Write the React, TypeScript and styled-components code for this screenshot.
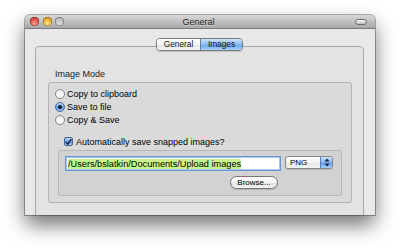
import React from "react";
import styled, { createGlobalStyle } from "styled-components";

const Global = createGlobalStyle`
  html, body { margin: 0; padding: 0; background: #fff; }
  body { font-family: "Liberation Sans", Arial, sans-serif; color: #000; }
  * { box-sizing: border-box; }
`;

const Stage = styled.div`
  width: 400px;
  height: 250px;
  overflow: hidden;
  padding: 15px 0 0 25px;
  background: #fff;
`;

const Window = styled.div`
  width: 350px;
  height: 200px;
  display: flex;
  flex-direction: column;
  border-radius: 5px 5px 0 0;
  overflow: hidden;
  background: #e8e8e8;
  box-shadow: 0 0 0 1px rgba(0, 0, 0, 0.3), 0 10px 20px rgba(0, 0, 0, 0.55);
`;

const TitleBar = styled.div`
  flex: none;
  height: 14px;
  display: grid;
  grid-template-columns: 1fr auto 1fr;
  align-items: center;
  padding: 0 8px 0 5px;
  background: linear-gradient(#d8d8d8, #a8a8a8);
  border-bottom: 1px solid #7a7a7a;
`;

const Lights = styled.div`
  display: flex;
  gap: 3.5px;
`;

const Light = styled.span<{ $c: string; $d: string }>`
  width: 9px;
  height: 9px;
  border-radius: 50%;
  background: radial-gradient(circle at 50% 72%, ${(p) => p.$c} 0%, ${(p) => p.$d} 85%);
  box-shadow: inset 0 0 0 0.6px rgba(0, 0, 0, 0.45);
`;

const Title = styled.div`
  font-size: 9px;
  line-height: 10px;
  color: #1e1e1e;
  text-shadow: 0 1px 0 rgba(255, 255, 255, 0.4);
`;

const Pill = styled.span`
  justify-self: end;
  width: 12px;
  height: 6px;
  border-radius: 3px;
  border: 1px solid #6e6e6e;
  background: linear-gradient(#fafafa, #bcbcbc);
`;

const Content = styled.div`
  flex: 1;
  min-height: 0;
  display: flex;
  flex-direction: column;
  padding: 9px 11px 0 10px;
  background: #e8e8e8;
`;

const Segmented = styled.div`
  flex: none;
  align-self: center;
  position: relative;
  z-index: 1;
  margin-bottom: -5px;
  display: flex;
  height: 13px;
  border: 1px solid #7a7a7a;
  border-radius: 4px;
  overflow: hidden;
  box-shadow: 0 1px 1px rgba(0, 0, 0, 0.15);
`;

const Seg = styled.div<{ $active?: boolean; $w: number }>`
  width: ${(p) => p.$w}px;
  text-align: center;
  font-size: 8.3px;
  line-height: 11px;
  color: #111;
  background: ${(p) =>
    p.$active
      ? "linear-gradient(#cfe4fb 0%, #8ab9f1 50%, #6aa5ee 55%, #a9d1fa 100%)"
      : "linear-gradient(#ffffff 0%, #f3f3f3 50%, #e6e6e6 55%, #f6f6f6 100%)"};
  & + & {
    border-left: 1px solid #6f7f95;
  }
`;

const TabView = styled.div`
  flex: none;
  height: 180px;
  display: flex;
  flex-direction: column;
  border: 1px solid #a9a9a9;
  border-radius: 4px;
  background: #e3e3e3;
  padding: 22px 11px 0 12px;
`;

const GroupLabel = styled.div`
  font-size: 9px;
  line-height: 11px;
  margin: 0 0 2px 7px;
  color: #1a1a1a;
`;

const Group = styled.div`
  flex: none;
  height: 121px;
  display: flex;
  flex-direction: column;
  border: 1px solid #b3b3b3;
  border-radius: 3px;
  background: #dadada;
  padding: 4px 9px 0 6px;
`;

const Row = styled.label<{ $indent?: number; $top?: number }>`
  flex: none;
  display: flex;
  align-items: center;
  gap: 2px;
  height: 13px;
  font-size: 9px;
  margin-left: ${(p) => p.$indent ?? 0}px;
  margin-top: ${(p) => p.$top ?? 0}px;
`;

const Radio = styled.span<{ $on?: boolean }>`
  width: 10px;
  height: 10px;
  border-radius: 50%;
  display: flex;
  align-items: center;
  justify-content: center;
  border: 1px solid ${(p) => (p.$on ? "#45638d" : "#858585")};
  background: ${(p) =>
    p.$on
      ? "linear-gradient(#c4ddf8 0%, #5e9be6 55%, #9fcaf6 100%)"
      : "linear-gradient(#efefef 0%, #fdfdfd 100%)"};
  &::after {
    content: "";
    display: ${(p) => (p.$on ? "block" : "none")};
    width: 4px;
    height: 4px;
    border-radius: 50%;
    background: #14202f;
  }
`;

const Check = styled.span`
  width: 9px;
  height: 9px;
  border-radius: 2px;
  border: 1px solid #45638d;
  background: linear-gradient(#c4ddf8 0%, #5e9be6 55%, #9fcaf6 100%);
  display: flex;
  align-items: center;
  justify-content: center;
  margin-right: 1px;
`;

const InnerBox = styled.div`
  flex: none;
  height: 46px;
  margin: 2px 0 0 3px;
  display: flex;
  gap: 4px;
  align-items: flex-start;
  border: 1px solid #b7b7b7;
  border-radius: 3px;
  background: #d2d2d2;
  padding: 5px 6px 0 6px;
`;

const FieldCol = styled.div`
  width: 216px;
  display: flex;
  flex-direction: column;
  align-items: flex-end;
  gap: 5px;
`;

const TextField = styled.div`
  width: 216px;
  height: 15px;
  border: 1px solid #6a97d4;
  box-shadow: inset 0 0 0 1px #a8c5ec;
  background: #fff;
  padding: 2px 2px 0;
  font-size: 9.2px;
  line-height: 11px;
  white-space: nowrap;
  overflow: hidden;
`;

const Highlight = styled.span`
  background: #c8f48e;
`;

const Popup = styled.div`
  width: 48px;
  height: 13px;
  display: flex;
  border: 1px solid #858585;
  border-radius: 3px;
  overflow: hidden;
  background: linear-gradient(#ffffff 0%, #f2f2f2 50%, #e4e4e4 55%, #f5f5f5 100%);
  box-shadow: 0 1px 1px rgba(0, 0, 0, 0.12);
`;

const PopupLabel = styled.span`
  flex: 1;
  font-size: 8px;
  line-height: 11px;
  padding-left: 4px;
`;

const PopupArrows = styled.span`
  width: 12px;
  display: flex;
  align-items: center;
  justify-content: center;
  border-left: 1px solid #5a7fb5;
  background: linear-gradient(#cfe4fb 0%, #7fb2ef 50%, #5e9de9 55%, #a7d0fa 100%);
`;

const Button = styled.div`
  width: 48px;
  height: 13px;
  margin-right: 3px;
  border: 1px solid #767676;
  border-radius: 7px;
  background: linear-gradient(#ffffff 0%, #f2f2f2 50%, #e2e2e2 55%, #f4f4f4 100%);
  box-shadow: 0 1px 1px rgba(0, 0, 0, 0.15);
  font-size: 8px;
  line-height: 11px;
  text-align: center;
`;

export default function App() {
  return (
    <>
      <Global />
      <Stage>
        <Window>
          <TitleBar>
            <Lights>
              <Light $c="#ff9a8c" $d="#c8261b" />
              <Light $c="#ffe98a" $d="#d98a08" />
              <Light $c="#dedede" $d="#a9a9a9" />
            </Lights>
            <Title>General</Title>
            <Pill />
          </TitleBar>
          <Content>
            <Segmented>
              <Seg $w={43}>General</Seg>
              <Seg $w={42} $active>
                Images
              </Seg>
            </Segmented>
            <TabView>
              <GroupLabel>Image Mode</GroupLabel>
              <Group>
                <Row>
                  <Radio />
                  Copy to clipboard
                </Row>
                <Row>
                  <Radio $on />
                  Save to file
                </Row>
                <Row>
                  <Radio />
                  Copy &amp; Save
                </Row>
                <Row $indent={9} $top={9}>
                  <Check>
                    <svg width="8" height="8" viewBox="0 0 8 8">
                      <path d="M1.2 4.2 L3.2 6.4 L7.2 0.8" fill="none" stroke="#111a28" strokeWidth="1.5" />
                    </svg>
                  </Check>
                  Automatically save snapped images?
                </Row>
                <InnerBox>
                  <FieldCol>
                    <TextField>
                      <Highlight>/Users/bslatkin/Documents/Upload images</Highlight>
                    </TextField>
                    <Button>Browse...</Button>
                  </FieldCol>
                  <Popup>
                    <PopupLabel>PNG</PopupLabel>
                    <PopupArrows>
                      <svg width="6" height="9" viewBox="0 0 6 9">
                        <path d="M3 0.5 L5.5 3.5 L0.5 3.5 Z" fill="#1b2433" />
                        <path d="M3 8.5 L5.5 5.5 L0.5 5.5 Z" fill="#1b2433" />
                      </svg>
                    </PopupArrows>
                  </Popup>
                </InnerBox>
              </Group>
            </TabView>
          </Content>
        </Window>
      </Stage>
    </>
  );
}
